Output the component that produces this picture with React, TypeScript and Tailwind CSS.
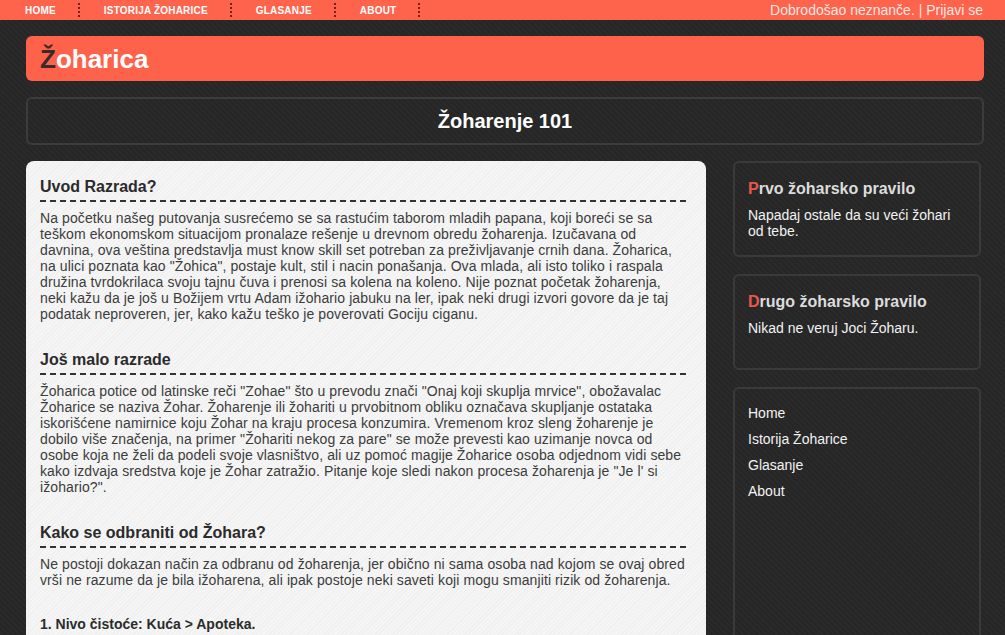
import React from "react";

const navItems = ["Home", "Istorija Žoharice", "Glasanje", "About"];

const sections = [
  {
    title: "Uvod Razrada?",
    lines: [
      "Na početku našeg putovanja susrećemo se sa rastućim taborom mladih papana, koji boreći se sa",
      "teškom ekonomskom situacijom pronalaze rešenje u drevnom obredu žoharenja. Izučavana od",
      "davnina, ova veština predstavlja must know skill set potreban za preživljavanje crnih dana. Žoharica,",
      "na ulici poznata kao \"Žohica\", postaje kult, stil i nacin ponašanja. Ova mlada, ali isto toliko i raspala",
      "družina tvrdokrilaca svoju tajnu čuva i prenosi sa kolena na koleno. Nije poznat početak žoharenja,",
      "neki kažu da je još u Božijem vrtu Adam ižohario jabuku na ler, ipak neki drugi izvori govore da je taj",
      "podatak neproveren, jer, kako kažu teško je poverovati Gociju ciganu.",
    ],
  },
  {
    title: "Još malo razrade",
    lines: [
      "Žoharica potice od latinske reči \"Zohae\" što u prevodu znači \"Onaj koji skuplja mrvice\", obožavalac",
      "Žoharice se naziva Žohar. Žoharenje ili žohariti u prvobitnom obliku označava skupljanje ostataka",
      "iskorišćene namirnice koju Žohar na kraju procesa konzumira. Vremenom kroz sleng žoharenje je",
      "dobilo više značenja, na primer \"Žohariti nekog za pare\" se može prevesti kao uzimanje novca od",
      "osobe koja ne želi da podeli svoje vlasništvo, ali uz pomoć magije Žoharice osoba odjednom vidi sebe",
      "kako izdvaja sredstva koje je Žohar zatražio. Pitanje koje sledi nakon procesa žoharenja je \"Je l' si",
      "ižohario?\".",
    ],
  },
  {
    title: "Kako se odbraniti od Žohara?",
    lines: [
      "Ne postoji dokazan način za odbranu od žoharenja, jer obično ni sama osoba nad kojom se ovaj obred",
      "vrši ne razume da je bila ižoharena, ali ipak postoje neki saveti koji mogu smanjiti rizik od žoharenja.",
    ],
  },
];

function RuleBox({ title, text }: { title: string; text: string }) {
  return (
    <div className="h-[96px] rounded-md border-2 border-[#3a3a3a] px-[13px] pt-[16px]">
      <h3 className="text-[16px] leading-[20px] font-bold text-[#dcdcdc]">
        <span className="text-[#e8574b]">{title[0]}</span>
        {title.slice(1)}
      </h3>
      <p className="mt-2 text-[14px] leading-4 text-[#f2f2f2]">{text}</p>
    </div>
  );
}

export default function App() {
  return (
    <div className="min-h-screen bg-[#272727] bg-[repeating-linear-gradient(45deg,#262626_0px,#262626_2px,#2a2a2a_2px,#2a2a2a_4px)] font-['Liberation_Sans',Arial,sans-serif]">
      {/* Top bar */}
      <div className="flex h-5 items-center justify-between bg-[#fe634c] pr-[22px]">
        <ul className="flex items-center pl-px">
          {navItems.map((item) => (
            <li
              key={item}
              className="flex h-[14px] items-center border-r-2 border-dotted border-[#7d1e14] pl-6 pr-[22px]"
            >
              <span className="text-[10px] tracking-[0.2px] font-bold uppercase text-white">{item}</span>
            </li>
          ))}
        </ul>
        <div className="text-[14px] text-[#fbe8e4]">Dobrodošao neznanče. | Prijavi se</div>
      </div>

      <div className="ml-[26px] w-[958px] pt-4">
        {/* Header */}
        <div className="flex h-[45px] items-center rounded-md bg-[#ff624b] px-[14px]">
          <h1 className="text-[26px] font-bold leading-none text-white">
            <span className="text-[#3b2a27]">Ž</span>oharica
          </h1>
        </div>

        <div className="mt-4 flex h-[48px] items-center justify-center rounded-md border-2 border-[#3c3c3c]">
          <h2 className="text-[20px] font-bold text-white">Žoharenje 101</h2>
        </div>

        <div className="mt-4 flex items-start gap-[27px]">
          {/* Main content */}
          <div className="min-h-[520px] w-[680px] shrink-0 rounded-t-lg bg-[#f4f4f4] bg-[repeating-linear-gradient(135deg,#f5f5f5_0px,#f5f5f5_2px,#efefef_2px,#efefef_3px)] pl-[14px] pr-4 pt-4 text-[#3c3c3c]">
            {sections.map((s) => (
              <div key={s.title} className="mb-[28px]">
                <h2 className="pb-[3px] text-[16px] leading-[20px] font-bold text-[#2b2b2b]">{s.title}</h2>
                <div className="h-[2px] bg-[repeating-linear-gradient(to_right,#333_0px,#333_6px,transparent_6px,transparent_10px)]" />
                <p className="mt-2 whitespace-nowrap text-[14px] leading-4 tracking-[0.1px]">
                  {s.lines.map((l, i) => (
                    <React.Fragment key={i}>
                      {l}
                      {i < s.lines.length - 1 && <br />}
                    </React.Fragment>
                  ))}
                </p>
              </div>
            ))}
            <h4 className="text-[14px] leading-4 font-bold text-[#2b2b2b]">1. Nivo čistoće: Kuća &gt; Apoteka.</h4>
          </div>

          {/* Sidebar */}
          <div className="flex w-[248px] flex-col gap-[17px]">
            <RuleBox title="Prvo žoharsko pravilo" text="Napadaj ostale da su veći žohari od tebe." />
            <RuleBox title="Drugo žoharsko pravilo" text="Nikad ne veruj Joci Žoharu." />
            <div className="h-[300px] rounded-md border-2 border-[#3a3a3a] px-[13px] pt-[11px]">
              <ul>
                {navItems.map((item) => (
                  <li key={item} className="text-[14px] leading-[26px] text-[#f2f2f2]">
                    {item}
                  </li>
                ))}
              </ul>
            </div>
          </div>
        </div>
      </div>
    </div>
  );
}
